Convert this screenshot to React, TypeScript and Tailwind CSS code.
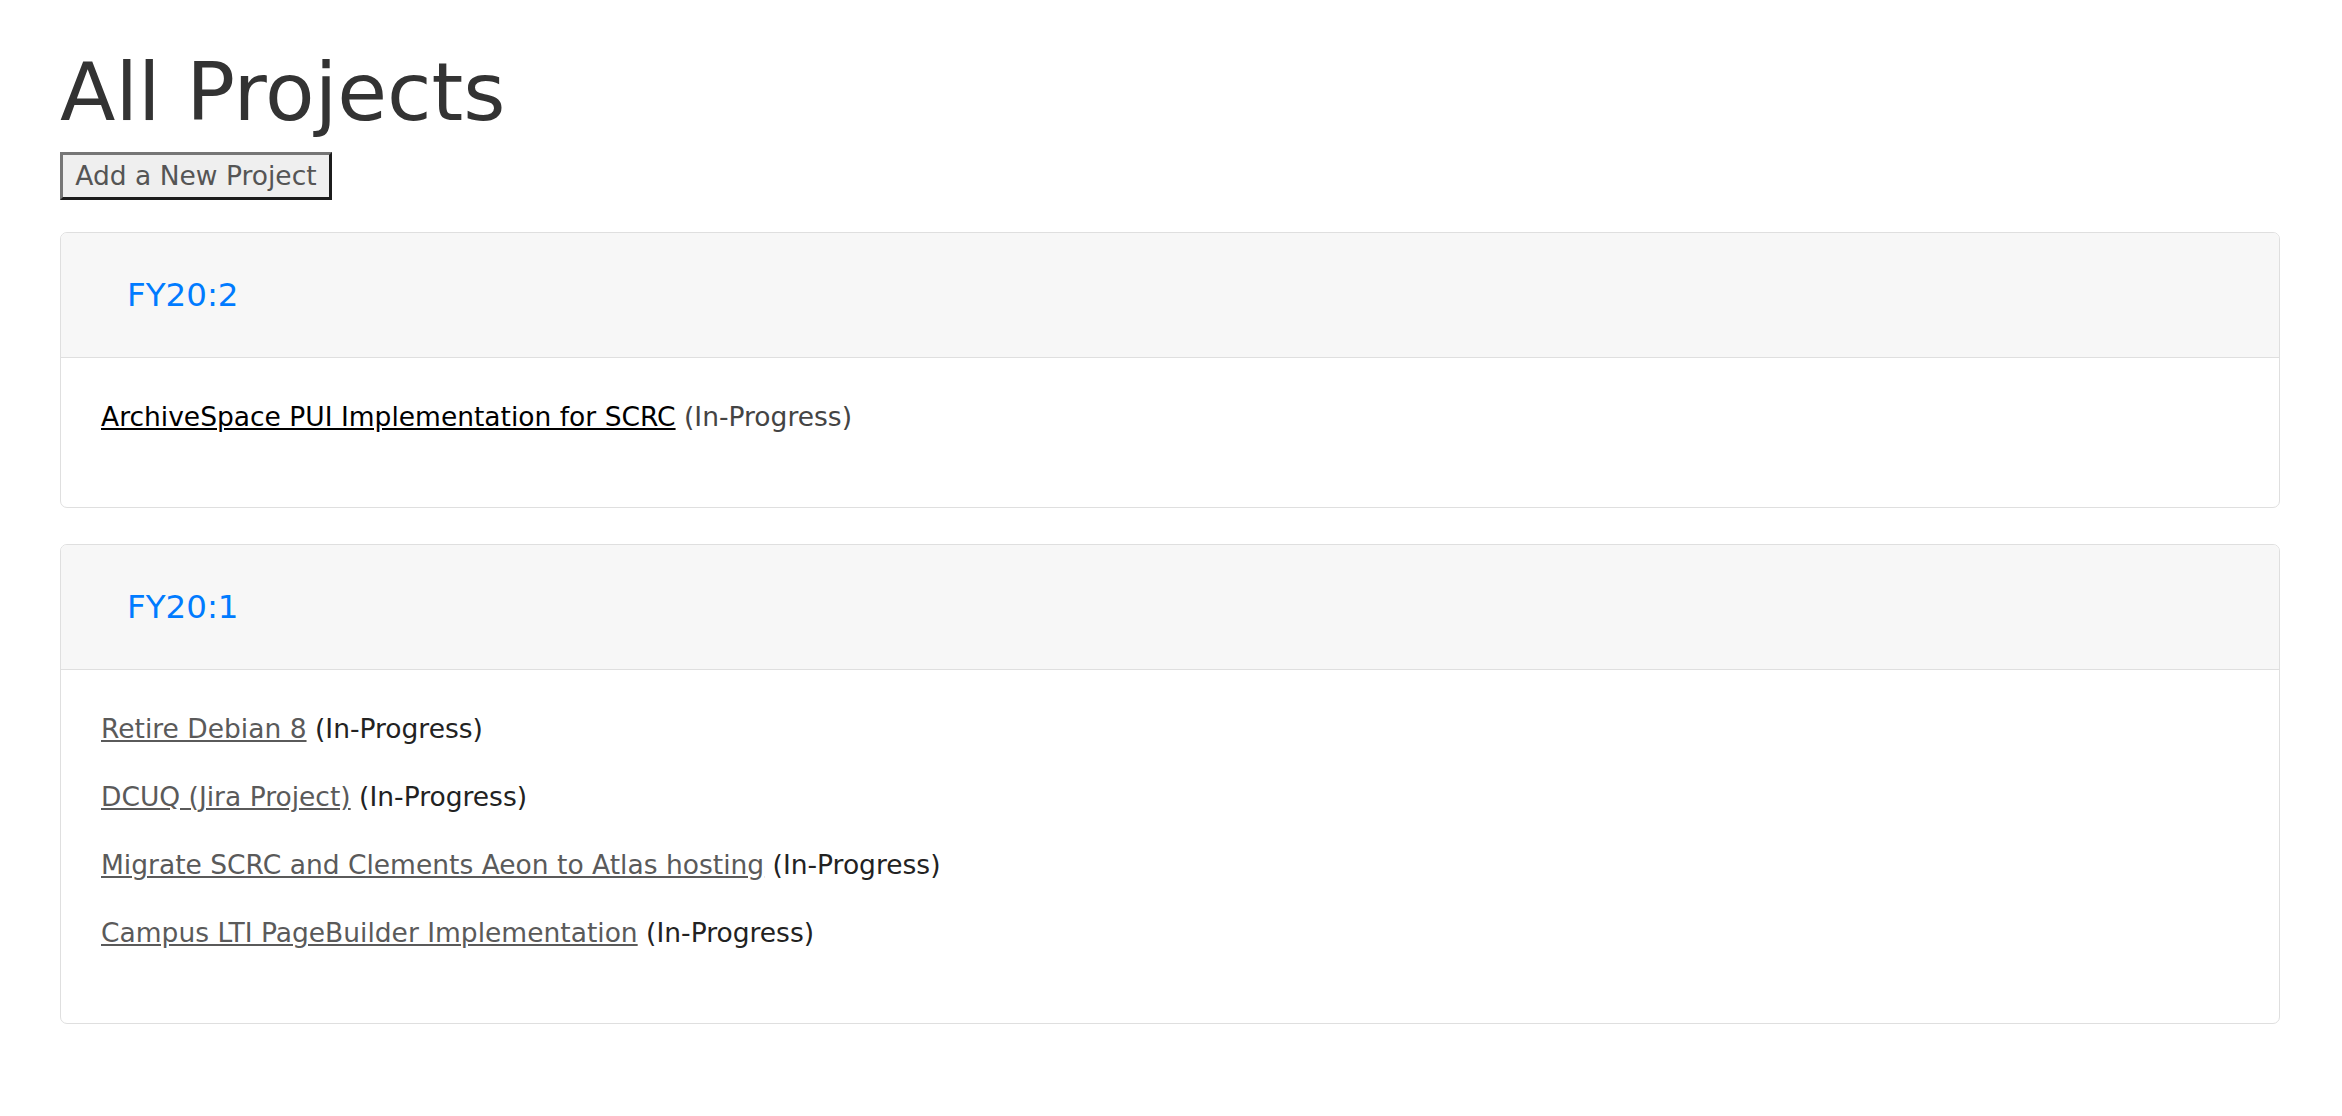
import React from 'react';

interface Project {
  name: string;
  status: string;
}

interface Group {
  title: string;
  projects: Project[];
  active?: boolean;
}

const groups: Group[] = [
  {
    title: 'FY20:2',
    active: true,
    projects: [{ name: 'ArchiveSpace PUI Implementation for SCRC', status: 'In-Progress' }],
  },
  {
    title: 'FY20:1',
    projects: [
      { name: 'Retire Debian 8', status: 'In-Progress' },
      { name: 'DCUQ (Jira Project)', status: 'In-Progress' },
      { name: 'Migrate SCRC and Clements Aeon to Atlas hosting', status: 'In-Progress' },
      { name: 'Campus LTI PageBuilder Implementation', status: 'In-Progress' },
    ],
  },
];

const GroupCard = ({ title, projects, active }: Group) => {
  return (
    <div className="border border-[#dfdfdf] rounded-[7px] bg-white overflow-hidden">
      <div className="bg-[#f7f7f7] border-b border-[#dfdfdf] px-[66px] py-[43px]">
        <h5 className="text-[32.5px] leading-[38px] text-[#007bff]">{title}</h5>
      </div>
      <div className="px-[40px] pt-[38px] pb-[43px]">
        {projects.map((p) => (
          <p key={p.name} className="mb-[27px] text-[26.5px] leading-[41px]">
            <a
              href="#"
              className={active ? 'underline text-black' : 'underline text-[#5a5a5a]'}
            >
              {p.name}
            </a>{' '}
            <span className={active ? 'text-[#444]' : 'text-[#222]'}>({p.status})</span>
          </p>
        ))}
      </div>
    </div>
  );
};

export default function App() {
  return (
    <div
      className="min-h-screen bg-white pl-[60px] pr-[62px] pt-[44px] pb-[60px] text-[#333]"
      style={{ fontFamily: '"DejaVu Sans", Verdana, sans-serif' }}
    >
      <h1 className="text-[81px] leading-[96px] text-[#333] mb-[12px]">All Projects</h1>
      <button className="h-[48px] w-[272px] bg-[#efefef] border-[3px] border-t-[#767676] border-l-[#767676] border-b-[#1c1c1c] border-r-[#1c1c1c] text-[26.5px] leading-none text-[#555] text-center">
        Add a New Project
      </button>
      <div className="mt-[32px] flex flex-col gap-[36px]">
        {groups.map((g) => (
          <GroupCard key={g.title} {...g} />
        ))}
      </div>
    </div>
  );
}
